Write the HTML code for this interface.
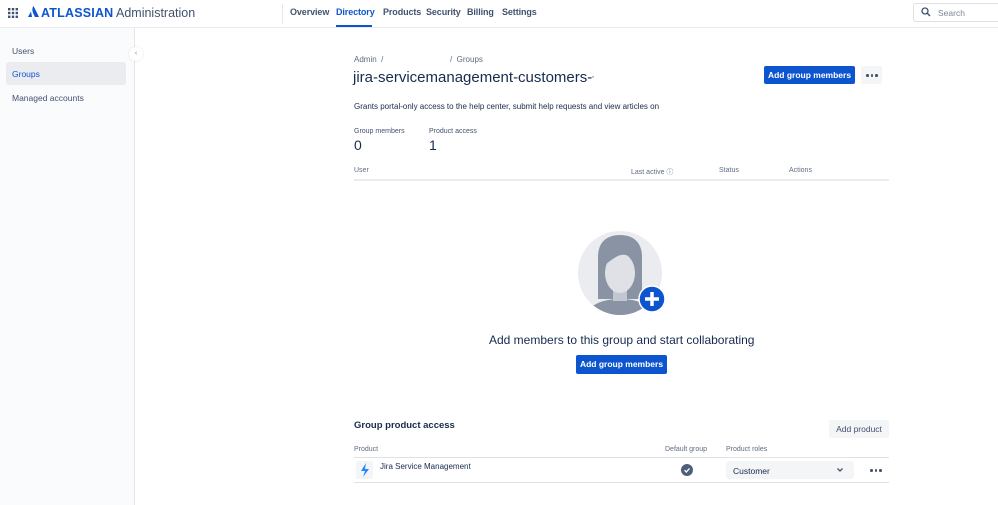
<!DOCTYPE html>
<html><head><meta charset="utf-8"><style>
*{box-sizing:border-box;margin:0;padding:0}
body{width:998px;height:505px;overflow:hidden;background:#fff;font-family:"Liberation Sans",sans-serif;color:#172b4d;position:relative}
.a{position:absolute;white-space:nowrap}
.hdr{position:absolute;left:0;top:0;width:998px;height:28px;border-bottom:1px solid #e9ebee;background:#fff}
.side{position:absolute;left:0;top:28px;width:135px;height:477px;background:#fafbfc;border-right:1px solid #e4e6ea}
.nav{font-size:9px;color:#42526e;top:7px;font-weight:bold;letter-spacing:-0.1px}
.btn{position:absolute;background:#0c55cf;color:#fff;font-size:8.5px;font-weight:bold;text-align:center;border-radius:2px}
.th{font-size:7px;color:#5e6c84}
.dots{position:absolute;display:flex;gap:2px}
.dots i{width:2.5px;height:2.5px;border-radius:50%;background:#42526e;display:block}
</style></head><body>
<div class="hdr">
  <svg class="a" style="left:8px;top:8px" width="10" height="10" viewBox="0 0 10 10" fill="#42526e">
    <rect x="0" y="0" width="2.4" height="2.4"/><rect x="3.8" y="0" width="2.4" height="2.4"/><rect x="7.6" y="0" width="2.4" height="2.4"/>
    <rect x="0" y="3.8" width="2.4" height="2.4"/><rect x="3.8" y="3.8" width="2.4" height="2.4"/><rect x="7.6" y="3.8" width="2.4" height="2.4"/>
    <rect x="0" y="7.6" width="2.4" height="2.4"/><rect x="3.8" y="7.6" width="2.4" height="2.4"/><rect x="7.6" y="7.6" width="2.4" height="2.4"/>
  </svg>
  <svg class="a" style="left:28px;top:6px" width="11" height="11" viewBox="0 0 11 11"><path d="M3 5.5 L0 11 H4 Z M5.5 0 C4 2 4 5 5.5 8 L7 11 H11 Z" fill="#0c55cf"/></svg>
  <div class="a" style="left:41px;top:6px;font-size:12.5px;font-weight:bold;color:#0c55cf;letter-spacing:0.2px">ATLASSIAN</div>
  <div class="a" style="left:116px;top:6px;font-size:12.5px;color:#42526e">Administration</div>
  <div class="a" style="left:282px;top:4px;width:1px;height:20px;background:#e4e6ea"></div>
  <div class="a nav" style="left:290px">Overview</div>
  <div class="a nav" style="left:336px;color:#0c55cf">Directory</div>
  <div class="a" style="left:336px;top:25px;width:36px;height:2px;background:#0c55cf"></div>
  <div class="a nav" style="left:383px">Products</div>
  <div class="a nav" style="left:426px">Security</div>
  <div class="a nav" style="left:467px">Billing</div>
  <div class="a nav" style="left:502px">Settings</div>
  <div class="a" style="left:913px;top:3px;width:90px;height:19px;border:1px solid #dfe1e6;border-radius:3px;background:#fff"></div>
  <svg class="a" style="left:921px;top:7px" width="10" height="10" viewBox="0 0 10 10"><circle cx="4" cy="4" r="3" fill="none" stroke="#42526e" stroke-width="1.3"/><path d="M6.3 6.3 L9 9" stroke="#42526e" stroke-width="1.4"/></svg>
  <div class="a" style="left:938px;top:8px;font-size:8.5px;color:#7a869a">Search</div>
</div>
<div class="side">
  <div class="a" style="left:12px;top:18px;font-size:8.5px;color:#42526e">Users</div>
  <div class="a" style="left:6px;top:34px;width:120px;height:23px;background:#ebecf0;border-radius:3px"></div>
  <div class="a" style="left:12px;top:41px;font-size:8.5px;color:#0c55cf">Groups</div>
  <div class="a" style="left:12px;top:65px;font-size:8.5px;color:#42526e">Managed accounts</div>
</div>
<div class="a" style="left:129px;top:47px;width:14px;height:14px;border-radius:50%;background:#fff;box-shadow:0 0 2px rgba(0,0,0,.12);font-size:7px;color:#7a869a;text-align:center;line-height:14px">‹</div>

<div class="a" style="left:354px;top:55px;font-size:8px;color:#5e6c84">Admin &nbsp;/</div>
<div class="a" style="left:450px;top:55px;font-size:8px;color:#5e6c84">/ &nbsp;Groups</div>
<div class="a" style="left:353px;top:69px;font-size:15px;color:#172b4d">jira-servicemanagement-customers-<span style="font-size:8px">'</span></div>
<div class="btn" style="left:764px;top:66px;width:91px;height:18px;line-height:18px">Add group members</div>
<div class="a" style="left:861px;top:66px;width:21px;height:18px;background:#f4f5f7;border-radius:2px"></div>
<div class="dots" style="left:866px;top:74px"><i></i><i></i><i></i></div>
<div class="a" style="left:354px;top:102px;font-size:8px;color:#172b4d">Grants portal-only access to the help center, submit help requests and view articles on</div>
<div class="a" style="left:354px;top:128px;font-size:7px;color:#42526e">Group members</div>
<div class="a" style="left:429px;top:128px;font-size:7px;color:#42526e">Product access</div>
<div class="a" style="left:354px;top:137px;font-size:14px;color:#172b4d">0</div>
<div class="a" style="left:429px;top:137px;font-size:14px;color:#172b4d">1</div>
<div class="a th" style="left:354px;top:167px">User</div>
<div class="a th" style="left:631px;top:167px">Last active ⓘ</div>
<div class="a th" style="left:719px;top:167px">Status</div>
<div class="a th" style="left:789px;top:167px">Actions</div>
<div class="a" style="left:354px;top:179px;width:535px;height:2px;background:#ebecf0"></div>

<svg class="a" style="left:576px;top:229px" width="92" height="88" viewBox="0 0 92 88">
  <defs><clipPath id="c"><circle cx="44" cy="44" r="42"/></clipPath></defs>
  <circle cx="44" cy="44" r="42" fill="#ebecf0"/>
  <g clip-path="url(#c)">
    <path d="M22 70 V28 C22 12 32 6 44 6 C56 6 66 12 66 28 V70 Z" fill="#8993a4"/>
    <path d="M8 92 C10 76 26 70 44 70 C62 70 78 76 80 92 Z" fill="#8993a4"/>
    <rect x="37" y="56" width="14" height="16" fill="#c1c7d0"/>
    <ellipse cx="44" cy="44" rx="15" ry="20" fill="#dfe1e6"/>
    <path d="M28 36 C30 20 46 18 58 28 C52 26 46 24 40 28 C36 30 32 34 28 36Z" fill="#8993a4"/>
  </g>
  <circle cx="76" cy="70" r="13" fill="#0c55cf" stroke="#fff" stroke-width="1.5"/>
  <path d="M76 63 V77 M69 70 H83" stroke="#fff" stroke-width="3.5"/>
</svg>
<div class="a" style="left:489px;top:333px;font-size:12px;color:#172b4d">Add members to this group and start collaborating</div>
<div class="btn" style="left:576px;top:355px;width:91px;height:19px;line-height:19px">Add group members</div>

<div class="a" style="left:354px;top:420px;font-size:9.5px;font-weight:bold;color:#172b4d">Group product access</div>
<div class="a" style="left:829px;top:420px;width:60px;height:18px;background:#f4f5f7;border-radius:2px;font-size:8.5px;color:#42526e;text-align:center;line-height:18px">Add product</div>
<div class="a th" style="left:354px;top:446px">Product</div>
<div class="a th" style="left:665px;top:446px">Default group</div>
<div class="a th" style="left:726px;top:446px">Product roles</div>
<div class="a" style="left:354px;top:457px;width:535px;height:1px;background:#dfe1e6"></div>
<div class="a" style="left:356px;top:461px;width:17px;height:18px;background:#f4f5f7;border-radius:2px"></div>
<svg class="a" style="left:360px;top:463px" width="10" height="14" viewBox="0 0 10 14"><path d="M6 0 L1 8 H5 L3 14 L9 6 H5 Z" fill="#2684ff"/></svg>
<div class="a" style="left:380px;top:462px;font-size:8px;color:#172b4d">Jira Service Management</div>
<svg class="a" style="left:681px;top:464px" width="12" height="12" viewBox="0 0 12 12"><circle cx="6" cy="6" r="6" fill="#505f79"/><path d="M3.5 6.2 L5.3 8 L8.5 4.5" stroke="#fff" stroke-width="1.3" fill="none"/></svg>
<div class="a" style="left:726px;top:461px;width:128px;height:18px;background:#f4f5f7;border-radius:3px"></div>
<div class="a" style="left:733px;top:466px;font-size:8.5px;color:#172b4d">Customer</div>
<svg class="a" style="left:836px;top:467px" width="8" height="6" viewBox="0 0 8 6"><path d="M1.5 1.5 L4 4 L6.5 1.5" stroke="#42526e" stroke-width="1.3" fill="none"/></svg>
<div class="dots" style="left:870px;top:469px"><i></i><i></i><i></i></div>
<div class="a" style="left:354px;top:482px;width:535px;height:1px;background:#dfe1e6"></div>
</body></html>
